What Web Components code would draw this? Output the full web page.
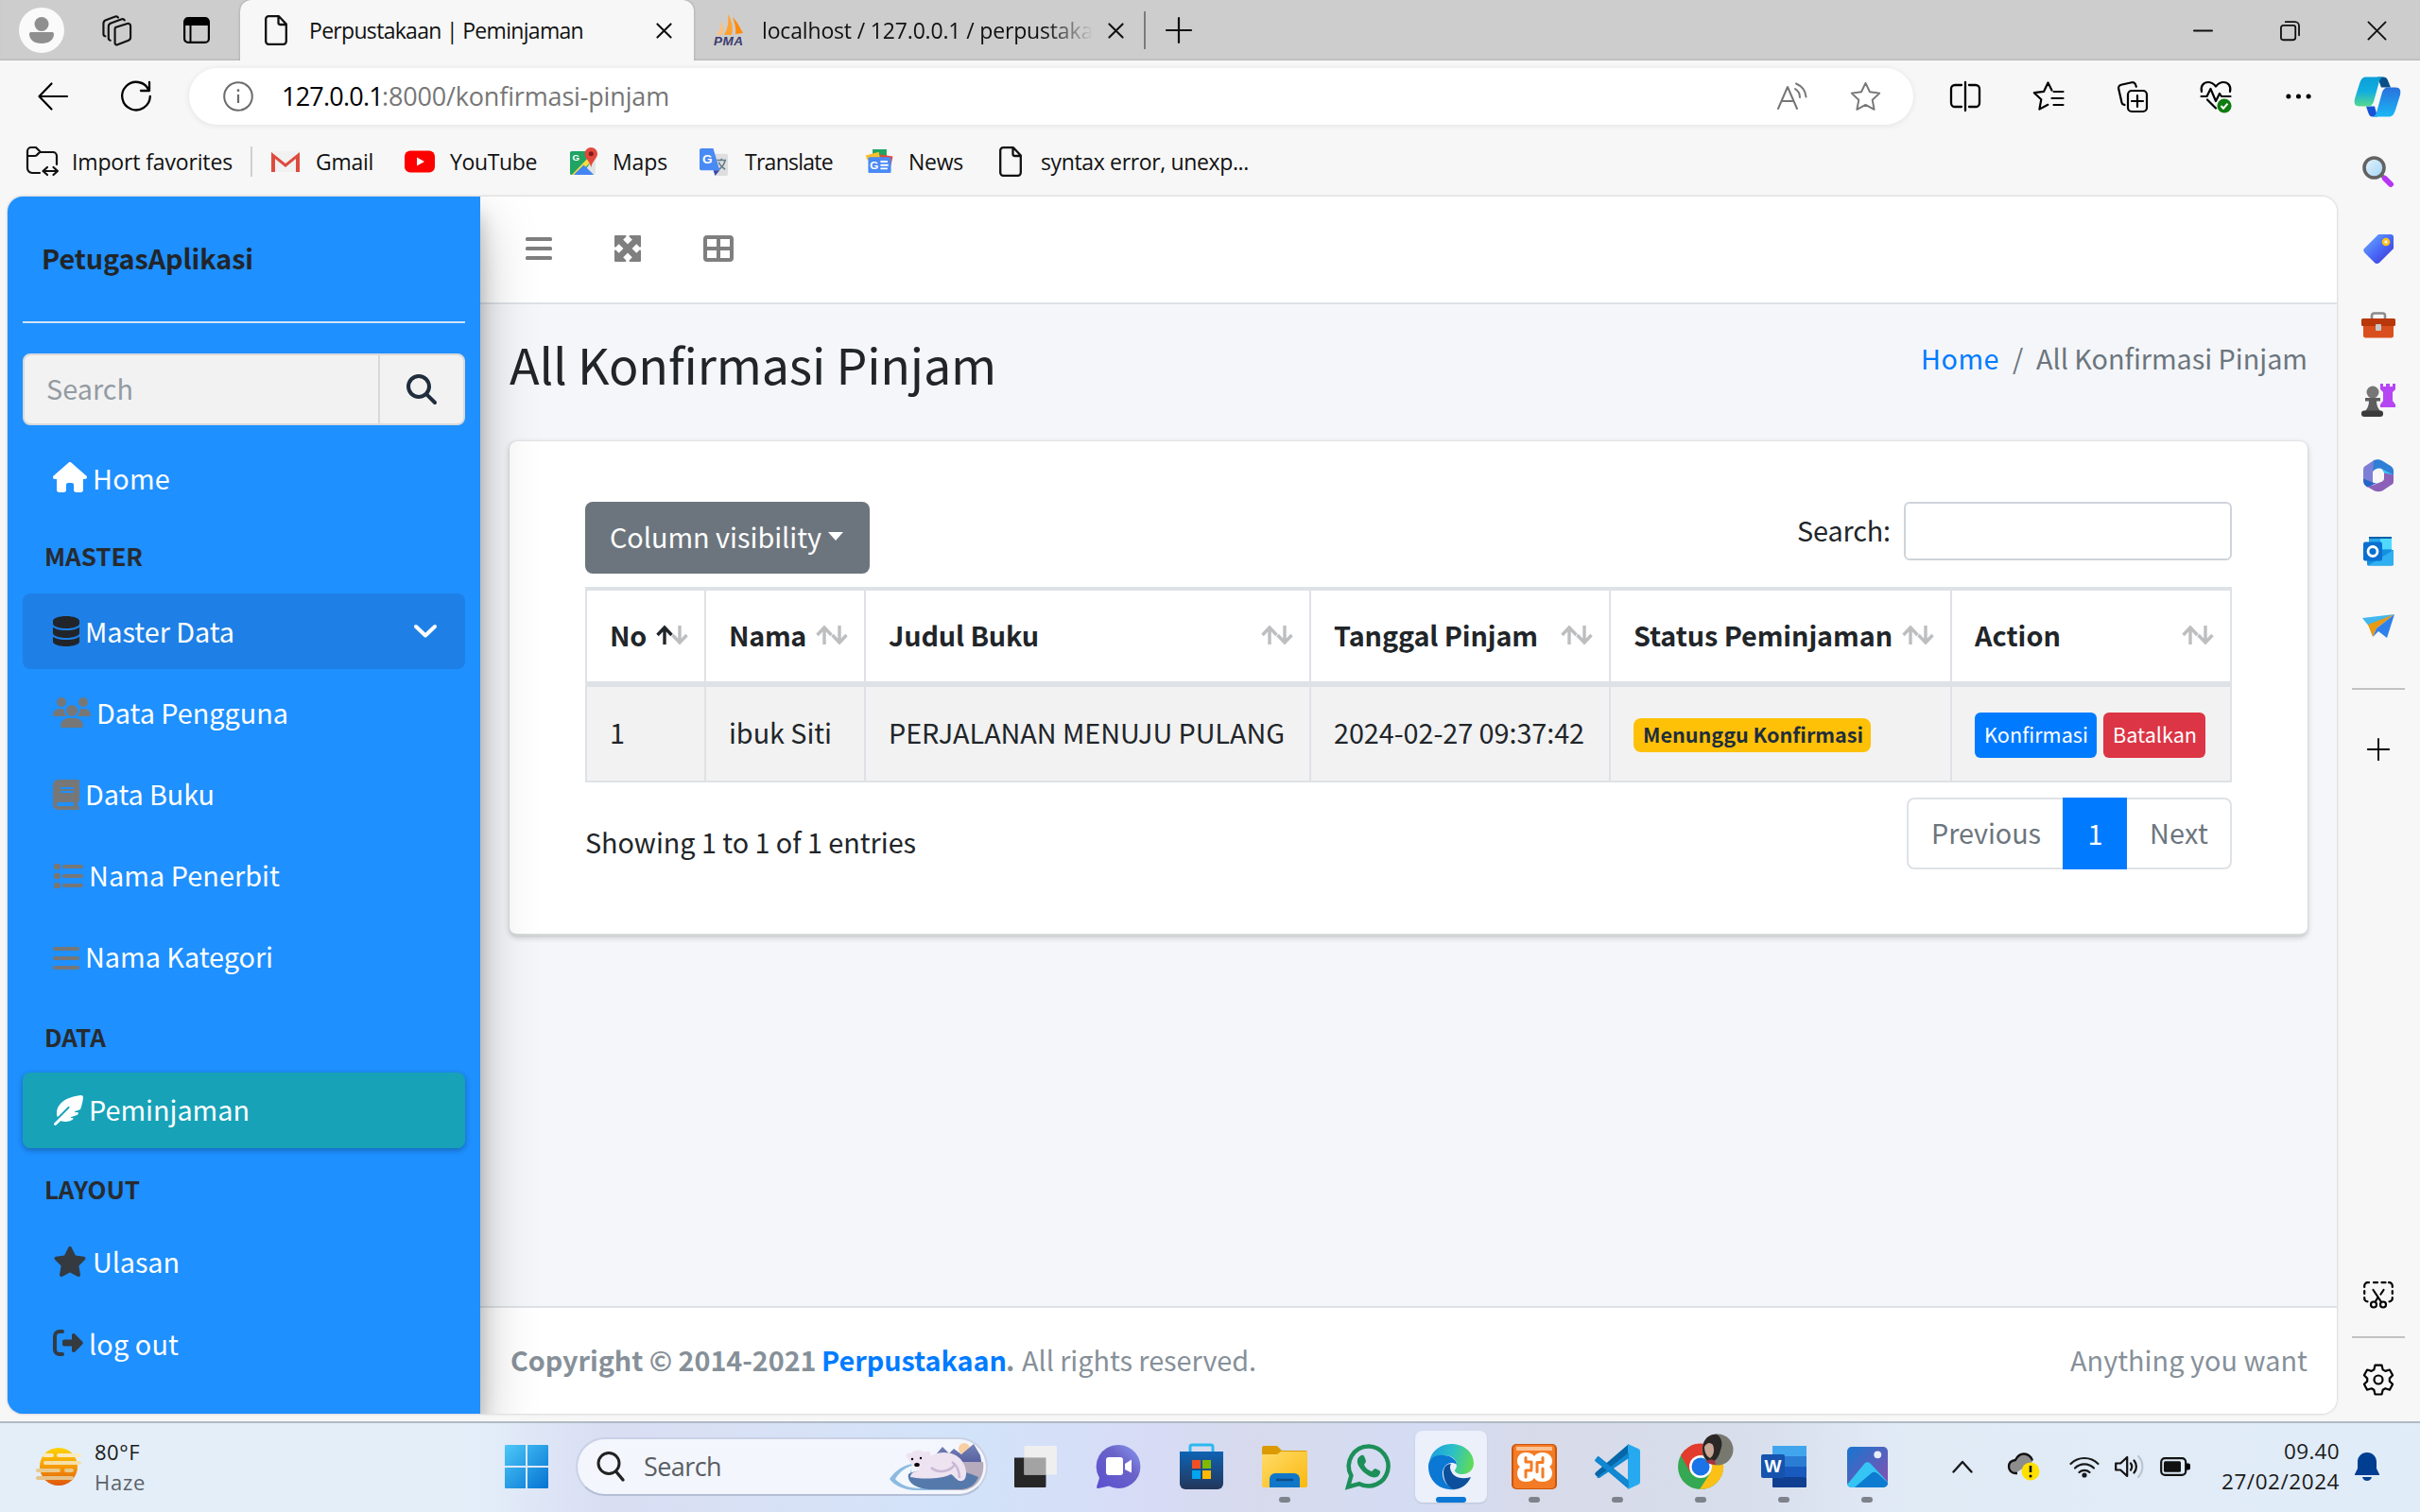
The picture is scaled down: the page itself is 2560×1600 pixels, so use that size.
<!DOCTYPE html>
<html lang="id">
<head>
<meta charset="utf-8">
<title>Perpustakaan | Peminjaman</title>
<style>
html,body{margin:0;padding:0;width:2560px;height:1600px;overflow:hidden;background:#f7f7f7}
</style>
</head>
<body>
<desktop-screen></desktop-screen>
<script>
const SOURCE = '"Noto Sans CJK SC","Noto Sans",sans-serif';
const SEGOE = '"Open Sans","Noto Sans",sans-serif';

const fa = (w, d) => [`0 0 ${w} 512`, `<path fill="currentColor" d="${d}"/>`];
const line = (vb, d, sw = 2.2, extra = '') => [vb, `<g fill="none" stroke="currentColor" stroke-width="${sw}" stroke-linecap="round" stroke-linejoin="round"><path d="${d}"/>${extra}</g>`];

const ICONS = {
  profile: ['0 0 48 48', '<circle cx="24" cy="24" r="24" fill="#fafafa"/><circle cx="24" cy="17.500" r="7.500" fill="#8f8f8f"/><path d="M12.500 26h23a1.800 1.800 0 0 1 1.500 2c0 6-5 10-13 10s-13-4-13-10a1.800 1.800 0 0 1 1.500-2z" fill="#8f8f8f"/>'],
  workspaces: line('0 0 34 34', 'M15 13.500l13-4.200a2.600 2.600 0 0 1 3.500 2.500v12.500a3.500 3.500 0 0 1-2.200 3.300l-12 4.700a2 2 0 0 1-2.800-1.900V16a3.200 3.200 0 0 1 .5-2.500zM9.500 27.500a2.500 2.500 0 0 1-2-2.500V12.500a4 4 0 0 1 2.600-3.700L22 4.500a2.500 2.500 0 0 1 3 1M4 23a2.500 2.500 0 0 1-2-2.500V9a4 4 0 0 1 2.600-3.700L15 1.600a2.500 2.500 0 0 1 3 1', 2.2),
  vtabs: ['0 0 28 28', '<rect x="1.100" y="1.100" width="25.800" height="25.800" rx="4" fill="none" stroke="#000" stroke-width="2.200"/><path d="M1 9V5a4 4 0 0 1 4-4h18a4 4 0 0 1 4 4v4z"/><path d="M7.500 8v19" stroke="#000" stroke-width="2"/>'],
  file: line('0 0 24 32', 'M4 1.200h11l7.800 8.300v18.300a3 3 0 0 1-3 3H4.200a3 3 0 0 1-3-3V4.200a3 3 0 0 1 3-3zM14.500 1.500v6.500a2 2 0 0 0 2 2h6', 2.3),
  close: line('0 0 18 18', 'M1.500 1.500l15 15M16.500 1.500l-15 15', 2.2),
  plus: line('0 0 28 28', 'M14 1v26M1 14h26', 2.2),
  min: line('0 0 22 22', 'M1 11h20', 2),
  restore: line('0 0 22 22', 'M3.500 5.200h11a2.500 2.500 0 0 1 2.500 2.500v11a2.500 2.500 0 0 1-2.500 2.500h-11A2.500 2.500 0 0 1 1 18.700v-11a2.500 2.500 0 0 1 2.500-2.500zM6 1.200h10.500a4.500 4.500 0 0 1 4.500 4.500V16', 1.9),
  winclose: line('0 0 22 22', 'M1.500 1.500l19 19M20.500 1.500l-19 19', 2),
  pma: ['0 0 32 34', '<path d="M15 0c1 8 0 15-4 22h8C21 14 19 6 15 0z" fill="#ffa233"/><path d="M20 3c5 5 7 10 11 17l-8 1c1-6-1-12-3-18z" fill="#ff8a0a"/><path d="M7 7c1 6 0 10-4 15h6c2-5 1-10-2-15z" fill="#ffc07a"/><text x="0" y="32.500" font-family="Liberation Sans" font-weight="700" font-style="italic" font-size="13.500" textLength="31" fill="#3c3c6e">PMA</text>'],
  back: line('0 0 32 30', 'M31 15H2M14.500 1.500L1.500 15l13 13.500', 2.2),
  reload: line('0 0 32 32', 'M29.500 9.500A14.800 14.800 0 1 0 30.800 16M30 1v9h-9', 2.3),
  info: ['0 0 32 32', '<circle cx="16" cy="16" r="14.800" fill="none" stroke="#6b6b6b" stroke-width="2"/><path d="M16 14v9" stroke="#6b6b6b" stroke-width="2.200"/><circle cx="16" cy="9.700" r="1.400" fill="#6b6b6b"/>'],
  read: ['0 0 32 30', '<g fill="none" stroke="#767676" stroke-width="2" stroke-linecap="round" stroke-linejoin="round"><path d="M1 28L11 5l10 23M4.500 20h13M19 7c3 2 5 5 5 9M20 1.500c6 2.500 10 7.500 10.500 14"/></g>'],
  star: ['0 0 34 32', '<path d="M17 1.500l4.600 9.600 10.600 1.400-7.800 7.300 2 10.500L17 25.200l-9.400 5.100 2-10.500-7.800-7.300 10.600-1.400z" fill="none" stroke="#767676" stroke-width="2" stroke-linejoin="round"/>'],
  split: line('0 0 32 32', 'M16 1v30M12 4H5a4 4 0 0 0-4 4v15a4 4 0 0 0 4 4h7M20 4h7a4 4 0 0 1 4 4v15a4 4 0 0 1-4 4h-7', 2.3),
  favs: line('0 0 34 32', 'M20.500 9.500L16.500 1.500l-4.400 9.300-10.300 1.400 7.500 7-1.900 10.400 9-4.800M22.500 11h10M20.500 18h12M22.500 25h10', 2.2),
  collect: line('0 0 32 33', 'M15 10h12a4 4 0 0 1 4 4v14a4 4 0 0 1-4 4H15a4 4 0 0 1-4-4V14a4 4 0 0 1 4-4zM21 15v12M15 21h12M7.500 25l-1-.4a3 3 0 0 1-2-2.200L1.200 8a3.500 3.500 0 0 1 2.600-4.200L15 1.200a3.500 3.500 0 0 1 4.200 2.600l.6 2', 2.2),
  heart: ['0 0 34 34', '<g fill="none" stroke="#000" stroke-width="2.200" stroke-linecap="round" stroke-linejoin="round"><path d="M2 12C.5 6 4 2 9 2c4 0 6 2 8 4.500C19 4 21 2 25 2c5 0 8.500 4 7 10M1.500 17h6l4-8 5.500 13 4-8 2 3h9.500M8 20.500l9 9"/></g><circle cx="26" cy="27" r="7.600" fill="#107c10"/><path d="M22.500 27l2.500 2.700 4.500-5" fill="none" stroke="#fff" stroke-width="2"/>'],
  dots: ['0 0 28 8', '<circle cx="3" cy="4" r="2.600"/><circle cx="14" cy="4" r="2.600"/><circle cx="25" cy="4" r="2.600"/>'],
  copilot: ['0 0 48 42', '<defs><linearGradient id="a" x1="0" y1="0" x2="0" y2="1"><stop offset="0" stop-color="#0a9fd8"/><stop offset=".5" stop-color="#12aee0"/><stop offset="1" stop-color="#55d98c"/></linearGradient><linearGradient id="b" x1="0" y1="0" x2="0" y2="1"><stop offset="0" stop-color="#2a70dc"/><stop offset="1" stop-color="#19b8f5"/></linearGradient></defs><path d="M24 0h6c4 0 5 3 6 6l2 5H28z" fill="#0a4f86"/><path d="M12 31h9l3 11h-5c-3 0-4-2-5-5z" fill="#1552d6"/><path d="M12 0h19c-4 0-5 4-6 8l-5 18c-1 3-3 5-6 5H5c-5 0-6-3-5-8L5 7c2-5 3-7 7-7z" fill="url(#a)"/><path d="M36 42H18c4 0 5-4 6-8l5-18c1-3 3-5 6-5h8c5 0 6 3 5 8l-5 16c-2 5-3 7-7 7z" fill="url(#b)"/>'],
  folderimp: line('0 0 34 32', 'M14 28H6a5 5 0 0 1-5-5V5a4 4 0 0 1 4-4h5l5 5h13a4 4 0 0 1 4 4v9M1 10h8c3 0 3-4 6-4M18 26h15M22 22l-4.500 4 4.500 4M28.500 22l4.500 4-4.500 4', 2.2),
  gmail: ['0 0 32 24', '<path d="M1 1h30v22H1z" fill="#f1f1f1"/><path d="M1 2l15 12L31 2v21h-4V9L16 18 5 9v14H1z" fill="#dd4b3e"/>'],
  yt: ['0 0 32 24', '<rect y=".5" width="32" height="23" rx="6" fill="#f00"/><path d="M13 7.500v9l8-4.500z" fill="#fff"/>'],
  maps: ['0 0 32 32', '<rect x="1" y="4" width="27" height="26" rx="2" fill="#1fa463"/><path d="M28 10v20H14z" fill="#e3e3e3"/><path d="M3 30L25 7l4 4L9 30z" fill="#fddc3f"/><path d="M5 30l11-11 11 11z" fill="#4285f4"/><path d="M24 0a7 7 0 0 1 7 7c0 5-6 8-7 15-1-7-7-10-7-15a7 7 0 0 1 7-7z" fill="#e2483d"/><circle cx="24" cy="7" r="2.600" fill="#7c1d18"/><text x="3.500" y="14" font-family="Liberation Sans" font-weight="700" font-size="10" fill="#fff">G</text>'],
  translate: ['0 0 32 32', '<path d="M12 7h17a2 2 0 0 1 2 2v20a2 2 0 0 1-2 2H18z" fill="#dedede"/><path d="M19 14h10M24 12v2M28 14c-1 5-4 8-7 10M21 16c1 3 4 6 7 8" stroke="#607d8b" stroke-width="1.600" fill="none"/><path d="M2 1h13l7 24H2a2 2 0 0 1-2-2V3a2 2 0 0 1 2-2z" fill="#4a8af4"/><path d="M15 25h7l-5 6z" fill="#3949ab"/><text x="3" y="18" font-family="Liberation Sans" font-weight="700" font-size="14" fill="#fff">G</text>'],
  news: ['0 0 32 28', '<path d="M8 0h16v10H8z" fill="#1fa463"/><path d="M0 7l15-4 2 9H2z" fill="#fbc02d"/><path d="M17 6l14 2-2 10H17z" fill="#ea4335"/><rect x="3" y="9" width="26" height="18" rx="1.500" fill="#4a8af4"/><text x="5" y="22.500" font-family="Liberation Sans" font-weight="700" font-size="12.500" fill="#fff">G</text><path d="M17 14h8M17 18h9M17 22h8" stroke="#fff" stroke-width="2"/>'],
  mag3d: ['0 0 34 34', '<defs><linearGradient id="a" x1="0" y1="0" x2="1" y2="1"><stop offset="0" stop-color="#e8f5fd"/><stop offset="1" stop-color="#9fd3f7"/></linearGradient></defs><path d="M20 20l5 5" stroke="#777" stroke-width="4"/><path d="M24 24l6 6" stroke="#b635f5" stroke-width="6" stroke-linecap="round"/><circle cx="12.500" cy="12.500" r="10.500" fill="url(#a)" stroke="#636363" stroke-width="3.600"/>'],
  tag: ['0 0 32 32', '<defs><linearGradient id="a" x1="0" y1="0" x2="1" y2="1"><stop offset="0" stop-color="#6fb1ff"/><stop offset=".5" stop-color="#4a6cf7"/><stop offset="1" stop-color="#3b2fd0"/></linearGradient></defs><path d="M16 1h13a3 3 0 0 1 3 3v12L17 31c-2 1.500-4 1-5 0L1 20c-1-1.500-1-3 0-4z" fill="url(#a)"/><circle cx="24" cy="9" r="3" fill="#eef" stroke="#ffc20e" stroke-width="2.600"/>'],
  toolbox: ['0 0 36 28', '<path d="M11 8V4a2.500 2.500 0 0 1 2.500-2.500h9A2.500 2.500 0 0 1 25 4v4" fill="none" stroke="#8a8a8a" stroke-width="2.600"/><path d="M2 12h32v13a2.500 2.500 0 0 1-2.500 2.500h-27A2.500 2.500 0 0 1 2 25z" fill="#d9501e"/><rect y="7" width="36" height="8" rx="1.500" fill="#b9380b"/><rect x="15" y="13" width="6" height="7" rx="1" fill="#c4c9cc"/>'],
  chess: ['0 0 36 36', '<path d="M20 1h3v3h3V1h4v3h3V1h3v6l-3 3v9l3 4v3H20v-3l3-4v-9l-3-3z" fill="#b646f3"/><circle cx="12" cy="10" r="6.500" fill="#767676"/><path d="M4 16h16v3.500H16c0 5 2 8 4 10.500H4c2-2.500 4-5.500 4-10.500H4z" fill="#5d5d5d"/><rect y="29.500" width="23" height="6.500" rx="3" fill="#3b3b3b"/>'],
  m365: ['0 0 32 34', '<path d="M12 0v10c-1 1-2 2-2 4v11c0 3-2 5-5 4l-3-2c-1-1-2-2-2-4V11c0-3 1-4 3-5z" fill="#7d7fd6"/><path d="M0 20l10 4c2 1 4 1 6 0L4 29l-2-2c-1-1-2-4-2-7z" fill="#2566c8"/><path d="M11 1c4-2 6-1 9 0l8 5c3 2 4 3 4 6v9L20 10c-3-2-6-1-10 2z" fill="#2f7fd6"/><path d="M20 10l12 6v5L22 14z" fill="#38c6f5"/><path d="M32 16v7c0 2-1 3-3 4l-9 6c-3 1-5 1-8 0l-7-4 15-6c2-1 2-3 2-5v-4z" fill="#8c5fb8"/><path d="M16 11l6 4v5l-6 4-6-4v-5z" fill="#f7f7f7"/>'],
  outlook: ['0 0 32 32', '<rect x="6" y="1" width="24" height="20" fill="#28a8ea"/><path d="M18 1h12v13H18z" fill="#50d9ff"/><path d="M6 1h24v2H6z" fill="#0a5fa8"/><path d="M4 15h28v15a1.500 1.500 0 0 1-1.500 1.500h-25A1.500 1.500 0 0 1 4 30z" fill="#1490df"/><path d="M32 15L5 31.500h25c1 0 2-1 2-2z" fill="#2fb0f0"/><rect y="6.500" width="20" height="20" rx="2" fill="#0a6fd0"/><circle cx="10" cy="16.500" r="5" fill="none" stroke="#fff" stroke-width="2.800"/>'],
  plane: ['0 0 34 26', '<path d="M0 4L34 0 8 14z" fill="#41b7ee"/><path d="M34 0L6 11l5 13 4-9z" fill="#e99a13"/><path d="M34 0L15 15l-4 9 6-6 9 7z" fill="#2f80ea"/>'],
  snip: ['0 0 32 28', '<g fill="none" stroke="#000" stroke-width="2.200" stroke-linecap="round"><path d="M1.200 6V4.500A3.300 3.300 0 0 1 4.500 1.200H6M11 1.200h4M19.500 1.200h4M27 1.200h.5a3.300 3.300 0 0 1 3.300 3.300V6M30.800 10v3M1.200 10v3M1.200 17v1a3.300 3.300 0 0 0 3.300 3.300M30.800 17v1a3.300 3.300 0 0 1-3.300 3.300M10.500 9l8 12M21.500 9l-3 4.500M15.500 17l-2.500 4"/><circle cx="11" cy="24.500" r="3"/><circle cx="21" cy="24.500" r="3"/></g>'],
  gear: line('0 0 32 34', 'M12.500 1.600h7l1.200 4.800 2.600 1.500 4.600-1.400 3.200 5.800-3.300 3.300v3l3.300 3.200-3.200 5.900-4.600-1.400-2.600 1.500-1.200 4.700h-7l-1.200-4.700-2.600-1.500-4.600 1.400-3.200-5.900 3.300-3.200v-3L.9 12.300l3.200-5.800 4.600 1.400 2.600-1.500z', 2.2, '<circle cx="16" cy="17" r="4.500"/>'),
  search: fa(512, 'M416 208c0 45.900-14.900 88.300-40 122.700L502.600 457.400c12.500 12.500 12.500 32.800 0 45.300s-32.800 12.500-45.300 0L330.700 376c-34.400 25.200-76.800 40-122.700 40C93.100 416 0 322.900 0 208S93.100 0 208 0S416 93.100 416 208zM208 352a144 144 0 1 0 0-288 144 144 0 1 0 0 288z'),
  house: fa(576, 'M575.8 255.500c0 18-15 32.100-32 32.100h-32l.7 160.200c0 2.700-.2 5.400-.5 8.100V472c0 22.100-17.900 40-40 40H456c-1.100 0-2.200 0-3.300-.1c-1.400 .1-2.800 .1-4.200 .1H416 392c-22.100 0-40-17.900-40-40V448 384c0-17.700-14.300-32-32-32H256c-17.700 0-32 14.300-32 32v64 24c0 22.100-17.900 40-40 40H160 128.100c-1.500 0-3-.1-4.500-.2c-1.200 .1-2.400 .2-3.600 .2H104c-22.100 0-40-17.900-40-40V360c0-.9 0-1.900 .1-2.800V287.600H32c-18 0-32-14-32-32.100c0-9 3-17 10-24L266.400 8c7-7 15-8 22-8s15 2 21 7L564.800 231.500c8 7 12 15 11 24z'),
  database: fa(448, 'M448 80v48c0 44.200-100.300 80-224 80S0 172.200 0 128V80C0 35.800 100.300 0 224 0S448 35.800 448 80zM393.200 214.700c20.800-7.400 39.900-16.900 54.800-28.600V288c0 44.200-100.300 80-224 80S0 332.200 0 288V186.100c14.900 11.800 34 21.200 54.800 28.600C99.700 230.700 159.500 240 224 240s124.300-9.300 169.200-25.300zM0 346.100c14.900 11.800 34 21.200 54.800 28.600C99.700 390.700 159.500 400 224 400s124.300-9.300 169.200-25.300c20.800-7.400 39.900-16.900 54.800-28.600V432c0 44.200-100.300 80-224 80S0 476.200 0 432V346.100z'),
  users: fa(640, 'M144 0a80 80 0 1 1 0 160A80 80 0 1 1 144 0zM512 0a80 80 0 1 1 0 160A80 80 0 1 1 512 0zM0 298.700C0 239.800 47.800 192 106.700 192h42.700c15.900 0 31 3.500 44.600 9.700c-1.300 7.200-1.900 14.700-1.900 22.300c0 38.200 16.800 72.500 43.300 96c-.2 0-.4 0-.7 0H21.300C9.600 320 0 310.400 0 298.700zM405.300 320c-.2 0-.4 0-.7 0c26.600-23.500 43.300-57.800 43.300-96c0-7.600-.7-15-1.900-22.300c13.600-6.300 28.700-9.700 44.600-9.700h42.700C592.200 192 640 239.800 640 298.700c0 11.800-9.600 21.300-21.300 21.300H405.300zM224 224a96 96 0 1 1 192 0 96 96 0 1 1 -192 0zM128 485.300C128 411.700 187.700 352 261.300 352H378.700C452.300 352 512 411.700 512 485.300c0 14.700-11.900 26.700-26.700 26.700H154.700c-14.700 0-26.700-11.900-26.700-26.700z'),
  book: fa(448, 'M96 0C43 0 0 43 0 96V416c0 53 43 96 96 96H384h32c17.700 0 32-14.300 32-32s-14.300-32-32-32V384c17.700 0 32-14.300 32-32V32c0-17.700-14.300-32-32-32H384 96zm0 384H352v64H96c-17.700 0-32-14.300-32-32s14.300-32 32-32zm32-240c0-8.800 7.200-16 16-16H336c8.800 0 16 7.200 16 16s-7.200 16-16 16H144c-8.800 0-16-7.200-16-16zm16 48H336c8.800 0 16 7.200 16 16s-7.200 16-16 16H144c-8.800 0-16-7.200-16-16s7.200-16 16-16z'),
  list: ['0 0 32 32', '<g fill="currentColor"><rect x="1" y="3" width="7" height="6" rx="1.500"/><rect x="1" y="13" width="7" height="6" rx="1.500"/><rect x="1" y="23" width="7" height="6" rx="1.500"/><rect x="10" y="4" width="22" height="4" rx="2"/><rect x="10" y="14" width="22" height="4" rx="2"/><rect x="10" y="24" width="22" height="4" rx="2"/></g>'],
  bars: ['0 0 28 32', '<g fill="currentColor"><rect y="4" width="28" height="4" rx="2"/><rect y="14" width="28" height="4" rx="2"/><rect y="24" width="28" height="4" rx="2"/></g>'],
  feather: fa(512, 'M278.500 215.600L23 471c-9.400 9.400-9.400 24.600 0 33.900s24.600 9.400 33.900 0l74.800-74.800c7.400 4.600 15.300 8.200 23.800 10.500C200.300 452.800 270 454.500 338 409.400c12.200-8.100 5.800-25.400-8.800-25.400l-16.100 0c-5.100 0-9.200-4.100-9.200-9.200c0-4.100 2.700-7.600 6.500-8.800l97.700-29.300c3.400-1 6.400-3.100 8.400-6.100c4.400-6.400 8.600-12.900 12.600-19.600c6.200-10.300-1.500-23-13.500-23l-38.600 0c-5.100 0-9.200-4.100-9.200-9.200c0-4.100 2.700-7.600 6.500-8.800l80.900-24.300c4.600-1.400 8.400-4.800 10.200-9.300C494.500 163 507.800 86.100 511.900 36.800c.8-9.900-3-19.600-10-26.600s-16.700-10.800-26.600-10C391.500 7 228.500 40.500 137.400 131.600C57.300 211.700 56.700 302.300 71.300 356.400c2.100 7.900 12 9.600 17.800 3.800L253.600 195.800c6.200-6.200 16.400-6.200 22.600 0c5.400 5.400 6.100 13.600 2.200 19.800z'),
  fastar: fa(576, 'M316.900 18C311.600 7 300.400 0 288.100 0s-23.400 7-28.800 18L195 150.300 51.400 171.500c-12 1.800-22 10.200-25.700 21.700s-.7 24.200 7.900 32.700L137.800 329 113.200 474.700c-2 12 3 24.200 12.900 31.300s23 8 33.800 2.300l128.300-68.500 128.300 68.500c10.800 5.700 23.900 4.900 33.800-2.300s14.900-19.300 12.900-31.300L438.500 329 542.700 225.900c8.600-8.500 11.700-21.200 7.900-32.700s-13.700-19.900-25.700-21.700L381.200 150.300 316.900 18z'),
  logout: ['0 0 32 28', '<path d="M10 2H7a5 5 0 0 0-5 5v14a5 5 0 0 0 5 5h3" fill="none" stroke="currentColor" stroke-width="4" stroke-linecap="round"/><path d="M12 10.500h8V6c0-1.800 2-2.500 3.300-1.300l8 8a2 2 0 0 1 0 2.700l-8 8C22 24.600 20 24 20 22v-4.500h-8a2 2 0 0 1-2-2v-3a2 2 0 0 1 2-2z" fill="currentColor"/>'],
  chev: line('0 0 24 16', 'M2 3l10 9.500L22 3', 4),
  menu: ['0 0 28 28', '<g fill="currentColor"><rect y="2" width="28" height="4" rx="1.500"/><rect y="12" width="28" height="4" rx="1.500"/><rect y="22" width="28" height="4" rx="1.500"/></g>'],
  expand: ['0 0 28 28', '<path d="M5 5l18 18M23 5L5 23" stroke="currentColor" stroke-width="6.500"/><path d="M0 1a1 1 0 0 1 1-1h10.500c1 0 1.300 1 .6 1.700L1.700 12.200C1 13 0 12.500 0 11.500zM28 1a1 1 0 0 0-1-1h-10.500c-1 0-1.300 1-.6 1.700l10.400 10.500c.7.800 1.700.300 1.700-.700zM0 27a1 1 0 0 0 1 1h10.500c1 0 1.300-1 .6-1.700L1.700 15.800C1 15 0 15.500 0 16.500zM28 27a1 1 0 0 1-1 1h-10.500c-1 0-1.300-1-.6-1.700l10.400-10.500c.7-.8 1.700-.3 1.700.7z" fill="currentColor"/>'],
  table: ['0 0 32 28', '<path fill="currentColor" fill-rule="evenodd" d="M4 0h24a4 4 0 0 1 4 4v20a4 4 0 0 1-4 4H4a4 4 0 0 1-4-4V4a4 4 0 0 1 4-4zm0 4v8h10V4zm14 0v8h10V4zM4 16v8h10v-8zm14 0v8h10v-8z"/>'],
  caret: ['0 0 16 9', '<path d="M0 0h16L8 9z" fill="#fff"/>'],
  sort: ['0 0 34 20', '<g fill="none" stroke-width="3.400"><path stroke="#bdbec0" d="M25 0v17M17.500 10l7.500 8 7.500-8"/><path stroke="var(--up,#bdbec0)" d="M9 20V2M1.500 10L9 2l7.500 8"/></g>'],
  haze: ['0 0 48 40', '<defs><linearGradient id="a" x1="0" y1="0" x2="0" y2="1"><stop offset="0" stop-color="#fdd400"/><stop offset=".5" stop-color="#f59b08"/><stop offset="1" stop-color="#e0560b"/></linearGradient></defs><circle cx="24" cy="20" r="20" fill="url(#a)"/><g stroke-width="4" stroke-linecap="round"><path d="M24 8h22M9 8h8" stroke="#fbeac0"/><path d="M10 16h36" stroke="#f7dfa8"/><path d="M2 24h22M32 24h6" stroke="#e9c98c"/><path d="M2 32h36" stroke="#e5c28a"/></g>'],
  win: ['0 0 46 46', '<defs><linearGradient id="a" x1="0" y1="0" x2="1" y2="1" ><stop offset="0" stop-color="#4cc8f8"/><stop offset="1" stop-color="#0573d2"/></linearGradient></defs><path fill="url(#a)" d="M1 0h21v22H0V1a1 1 0 0 1 1-1zM24 0h21a1 1 0 0 1 1 1v21H24zM0 24h22v22H1a1 1 0 0 1-1-1zM24 24h22v21a1 1 0 0 1-1 1H24z"/>'],
  tsearch: ['0 0 30 32', '<circle cx="13" cy="12.500" r="11" fill="none" stroke="#222" stroke-width="3"/><path d="M20.500 21l7.500 9" stroke="#222" stroke-width="3.400" stroke-linecap="round"/>'],
  bear: ['0 0 100 50', '<defs><linearGradient id="a" x1="0" y1="0" x2="0" y2="1"><stop offset="0" stop-color="#7683b8"/><stop offset="1" stop-color="#434b8f"/></linearGradient></defs><circle cx="79" cy="6" r="6" fill="#f8cfa0"/><path d="M44 18l12-14 7 7 5-5 8 6 13-11 7 12 2 12v8H50z" fill="url(#a)"/><path d="M68 20h31c2 14-6 29-22 30H40z" fill="#b5abbc"/><path d="M24 22C12 24 4 32 0 38c5 7 14 11 26 12h46C40 50 18 42 24 22z" fill="#8dbbe0"/><path d="M6 38c5-8 11-12 18-14-4 10-2 19 10 24-14 0-23-4-28-10z" fill="#f2f8fd"/><path d="M20 33c8-6 50-8 74 3-3 8-9 12-18 13H42C28 48 18 42 20 33z" fill="#5679ab"/><path d="M22 35c2-5 7-5 11-7-6-2-12-6-13-11-4-3-2-8 3-6 3-4 10-5 14-1 4-3 8 0 6 4 12-7 30-5 36 9 3 7 3 15-2 17-6 1-7-4-12-7-10 5-24 5-37 4-4-1-6 0-6-2z" fill="#ede3f1"/><path d="M44 26c8 7 20 4 25-3M66 20c6 4 8 10 8 17" fill="none" stroke="#c9b8d6" stroke-width="2.500"/><circle cx="24" cy="17" r="1.200"/><circle cx="33" cy="16" r="1.200"/><ellipse cx="29" cy="23" rx="2.800" ry="2"/>'],
  taskview: ['0 0 48 46', '<path d="M1 13h35v32a1 1 0 0 1-1 1H2a1 1 0 0 1-1-1z" fill="#272727"/><path d="M13 0h34a1 1 0 0 1 1 1v31H12V1z" fill="#efefef"/><path d="M12 13h24v19H12z" fill="#a3a3a3"/>'],
  chat: ['0 0 46 46', '<defs><linearGradient id="a" x1="0" y1="1" x2="1" y2="0"><stop offset="0" stop-color="#5a4fd0"/><stop offset=".6" stop-color="#6a63c8"/><stop offset="1" stop-color="#8b9bf2"/></linearGradient></defs><path d="M23 0a23 23 0 1 1-10 43.500L2 46c-1.500.3-2.300-1-1.700-2.300L3 35A23 23 0 0 1 23 0z" fill="url(#a)"/><rect x="10" y="13" width="18" height="19" rx="3" fill="#fff"/><path d="M30 20l7-4.500v14L30 26z" fill="#fff"/>'],
  store: ['0 0 46 48', '<defs><linearGradient id="a" x1="0" y1="0" x2="0" y2="1"><stop offset="0" stop-color="#0e63b4"/><stop offset="1" stop-color="#24365a"/></linearGradient></defs><path d="M11 10V3a2 2 0 0 1 2-2h20a2 2 0 0 1 2 2v7" fill="none" stroke="#2cb8f0" stroke-width="3"/><path d="M0 8h46v34a6 6 0 0 1-6 6H6a6 6 0 0 1-6-6z" fill="url(#a)"/><path d="M13 17h9v9h-9z" fill="#f25022"/><path d="M24 17h9v9h-9z" fill="#7fba00"/><path d="M13 28h9v9h-9z" fill="#00a4ef"/><path d="M24 28h9v9h-9z" fill="#ffb900"/>'],
  explorer: ['0 0 48 44', '<path d="M0 2a2 2 0 0 1 2-2h14l5 5h25a2 2 0 0 1 2 2v8H0z" fill="#dc9a05"/><defs><linearGradient id="a" x1="0" y1="0" x2="1" y2="1"><stop offset="0" stop-color="#ffdc6b"/><stop offset="1" stop-color="#fbb80e"/></linearGradient></defs><path d="M0 9h16l4-3h28v36a2 2 0 0 1-2 2H2a2 2 0 0 1-2-2z" fill="url(#a)"/><path d="M8 44V35a6 6 0 0 1 6-6h20a6 6 0 0 1 6 6v9z" fill="#1077c8"/><path d="M15 36h18" stroke="#0c4d8a" stroke-width="2.500"/>'],
  whatsapp: ['0 0 48 48', '<path d="M25 2.500a21 21 0 1 1-10 39.700L3 45.500l3.400-12A21 21 0 0 1 25 2.500z" fill="none" stroke="#1d8f58" stroke-width="4.500"/><path d="M17 12c2-1 3 0 4 3l1 3c0 2-2 3-2 4 2 4 5 6 8 7 1 0 2-3 4-3l4 2c2 1 1 4-1 6-4 3-9 1-14-3-5-4-9-10-8-14 0-2 2-4 4-5z" fill="#1d8f58"/>'],
  edge: ['0 0 48 48', '<defs><linearGradient id="a" x1="0" y1=".3" x2="1" y2=".5"><stop offset="0" stop-color="#1b9de0"/><stop offset=".5" stop-color="#2cc0c8"/><stop offset="1" stop-color="#5fdc56"/></linearGradient></defs><path d="M1 19C3 7 13 0 24 0c15 0 24 10 24 20 0 8-6 12-12 12-5 0-8-2-8-4 0-1 2-2 2-6 0-6-6-10-13-10C9 12 3 15 1 19z" fill="url(#a)"/><path d="M0 24c0-9 8-13 16-12 8 0 14 5 14 10-6-5-15 0-15 9 0 8 5 15 14 17C12 50 0 39 0 24z" fill="#0b78d4"/><path d="M16 30c0-6 4-9 8-9-2 3-1 8 3 12 5 4 12 4 18 2-3 7-10 13-18 13C20 46 16 38 16 30z" fill="#0c4f9c"/>'],
  xampp: ['0 0 48 48', '<rect width="48" height="48" rx="5" fill="#c9550c"/><rect x="2" y="1" width="44" height="46" rx="4" fill="#f47b25"/><path d="M5 3h38v4H5z" fill="#fcc093"/><path d="M15 9c4 0 7 1 9 4 2-3 5-4 9-4 6 0 10 4 10 9 0 3-1 5-3 6 2 2 3 4 3 7 0 5-4 9-10 9-4 0-7-1-9-4-2 3-5 4-9 4-6 0-9-4-9-9 0-3 1-5 3-7-2-1-3-3-3-6 0-5 3-9 9-9z" fill="#fff"/><path d="M15 14.500v4.500h6M21 19v7M33 14.500v5h-5M27 19.500v10M15 35v-7h6M33 35v-9" fill="none" stroke="#f47b25" stroke-width="3" stroke-linecap="round" stroke-linejoin="round"/>'],
  vscode: ['0 0 48 48', '<path d="M0 17l4-4 31 25v9L1 18z" fill="#0b7cc6"/><path d="M0 32l4 4 32-25V0L1 30z" fill="#0567a8"/><path d="M35 0l11 5a3 3 0 0 1 2 3v32a3 3 0 0 1-2 3l-11 5z" fill="#27a9f0"/><path d="M3 13l33 26v7L0 18zM2 36L36 9v6L5 36z" fill="#1088d2"/>'],
  chrome: ['0 0 60 60', '<circle cx="25" cy="35" r="24" fill="#34a853"/><path d="M4 23a24 24 0 0 1 42 0l-21 1-11 17z" fill="#e33b2e"/><path d="M46 23a24 24 0 0 1-22 36l11-17c3-5 2-12-2-18z" fill="#fbc116"/><circle cx="25" cy="35" r="12" fill="#fff"/><circle cx="25" cy="35" r="9.500" fill="#1a73e8"/><circle cx="43" cy="17" r="16.500" fill="#77796f"/><path d="M27 17C27 6 34 0 42 .7c5 3 7 9 4 17-2 8-6 11-9 14-6-2-10-8-10-15z" fill="#2b2726"/><path d="M29 14c3-5 6-5 9-2 2 6 1 11-3 14-4-2-6-7-6-12z" fill="#c9a796"/><path d="M31 30c2-3 6-3 9-1l1 4c-4 0-8-1-10-3z" fill="#a8323e"/>'],
  word: ['0 0 48 44', '<rect x="12" width="36" height="11" fill="#41a5ee"/><rect x="12" y="11" width="36" height="11" fill="#2b7cd3"/><rect x="12" y="22" width="36" height="11" fill="#185abd"/><rect x="12" y="33" width="36" height="11" rx="1" fill="#103f91"/><rect y="9" width="25" height="25" rx="2" fill="#1553ae"/><text x="3.500" y="28" font-family="Liberation Sans" font-weight="700" font-size="18" textLength="18" lengthAdjust="spacingAndGlyphs" fill="#fff">W</text>'],
  photos: ['0 0 44 44', '<defs><linearGradient id="a" x1="0" y1="0" x2="1" y2="1"><stop offset="0" stop-color="#1576d0"/><stop offset="1" stop-color="#8b4fae"/></linearGradient></defs><rect width="44" height="44" rx="5" fill="url(#a)"/><path d="M0 41l19-23c2-2 4-2 6 0l19 20v1a5 5 0 0 1-5 5H5a5 5 0 0 1-5-3z" fill="#35c5f4"/><path d="M8 44l19-16c2-1 4-1 6 1l11 10a5 5 0 0 1-5 5z" fill="#0c7bd0"/><circle cx="33" cy="8.500" r="4" fill="#e8eef8"/>'],
  tchev: line('0 0 22 14', 'M1.500 12.500L11 2l9.500 10.500', 2.4),
  cloud: ['0 0 34 30', '<path d="M8 22c-4 0-7-3-7-7s3-6 6-6c1-4 5-7 9-7 5 0 9 3 10 8" fill="#8d8d8d"/><path d="M10 22H8c-4 0-7-3-7-7s3-6.500 7-7c2-4 5-6.500 9-6.500 4 0 8 3 9 7" fill="none" stroke="#111" stroke-width="2.300"/><circle cx="24" cy="20" r="9.500" fill="#ffe000"/><path d="M24 14v7" stroke="#111" stroke-width="2.600"/><circle cx="24" cy="25" r="1.500"/>'],
  wifi: line('0 0 32 24', 'M1.500 9a20.500 20.500 0 0 1 29 0M6 13.500a14 14 0 0 1 20 0M10.500 18a8 8 0 0 1 11 0', 2.2, '<circle cx="16" cy="21" r="1.500" fill="currentColor"/>'),
  volume: ['0 0 32 26', '<g fill="none" stroke="#111" stroke-width="2.200" stroke-linejoin="round" stroke-linecap="round"><path d="M1.200 9.500h5l7-6.500v20l-7-6.500h-5zM17 9.500a6 6 0 0 1 0 7M20.500 6.500a10 10 0 0 1 0 13"/><path d="M25 2a16 16 0 0 1 0 22" stroke="#bcc6d0"/></g>'],
  battery: ['0 0 33 20', '<rect x="1.200" y="1.200" width="26" height="17.600" rx="4" fill="none" stroke="#111" stroke-width="2.200"/><rect x="4" y="4.300" width="18" height="11.500" rx="1.500" fill="#111"/><path d="M28 6.500h2a2 2 0 0 1 2 2v3a2 2 0 0 1-2 2h-2z"/>'],
  bell: ['0 0 26 30', '<path d="M13 0c6 0 10 4.500 10 10v7l3 6v1H0v-1l3-6v-7C3 4.500 7 0 13 0zM8 26h10c-1 3-3 4-5 4s-4-1-5-4z" fill="#003e92"/>']
};

class Base extends HTMLElement {
  connectedCallback() {
    if (this.shadowRoot) return;
    this.attachShadow({ mode: 'open' }).innerHTML = this.render();
  }
  a(n, d = '') { return this.getAttribute(n) ?? d; }
}

/* Inline SVG from the icon set; w and h give the box. */
class XIcon extends Base {
  render() {
    const [vb, body] = ICONS[this.a('n')];
    return `<style>:host{display:block;flex:none;width:${this.a('w')}px;height:${this.a('h')}px}svg{display:block;width:100%;height:100%;overflow:visible}</style><svg viewBox="${vb}">${body}</svg>`;
  }
}

/* One line of text whose tracking is adjusted to fill the width w. */
class FitText extends Base {
  render() {
    return `<style>:host{display:block;flex:none;width:${this.a('w')}px;white-space:pre;overflow:visible}span{display:inline-block}</style><span><slot></slot></span>`;
  }
  connectedCallback() {
    super.connectedCallback();
    const s = this.shadowRoot.querySelector('span'), n = this.textContent.length;
    const nat = s.getBoundingClientRect().width;
    if (nat) s.style.letterSpacing = ((+this.a('w') + 1 - nat) / n).toFixed(3) + 'px';
  }
}

class BrowserTabs extends Base {
  render() {
    return `<style>
      :host{display:flex;align-items:center;height:64px;background:#cdcdcd;font:23px/60px ${SEGOE};color:#111;box-shadow:inset 0 -2px 2px -1px #b4b4b4}
      .tab{position:relative;display:flex;align-items:center;width:480px;height:64px;margin-left:32px;background:#f7f7f7;border-radius:12px 12px 0 0;box-sizing:border-box;padding-left:26px;box-shadow:0 0 3px rgba(0,0,0,.25);clip-path:inset(0 -3px 0 -3px)}
      .fade{margin-left:19px;width:350px;overflow:hidden;-webkit-mask:linear-gradient(90deg,#000 300px,transparent 350px);mask:linear-gradient(90deg,#000 300px,transparent 350px)}
      i{width:2px;height:40px;background:#7b7b7b;margin-left:21px}
      .sp{flex:1}
    </style>
    <x-icon n="profile" w="48" h="48" style="margin-left:20px"></x-icon>
    <x-icon n="workspaces" w="34" h="33" style="margin-left:39px"></x-icon>
    <x-icon n="vtabs" w="28" h="28" style="margin-left:53px"></x-icon>
    <div class="tab"><x-icon n="file" w="24" h="32"></x-icon><fit-text w="289" style="margin-left:23px">Perpustakaan | Peminjaman</fit-text><x-icon n="close" w="17" h="17" style="margin-left:78px"></x-icon></div>
    <x-icon n="pma" w="32" h="34" style="margin-left:21px"></x-icon>
    <div class="fade"><fit-text w="349">localhost / 127.0.0.1 / perpustaka</fit-text></div>
    <x-icon n="close" w="17" h="17" style="margin-left:16px"></x-icon><i></i>
    <x-icon n="plus" w="28" h="28" style="margin-left:21px"></x-icon><span class="sp"></span>
    <x-icon n="min" w="21" h="21" style="margin-right:71px"></x-icon><x-icon n="restore" w="21" h="21" style="margin-right:71px"></x-icon><x-icon n="winclose" w="21" h="21" style="margin-right:35px"></x-icon>`;
  }
}

class BrowserToolbar extends Base {
  render() {
    return `<style>
      :host{display:flex;align-items:center;height:76px;font:27px/40px ${SEGOE};color:#000}
      .url{display:flex;align-items:center;width:1824px;height:60px;border-radius:30px;background:#fff;margin-left:40px;box-sizing:border-box;padding:0 34px 0 36px;box-shadow:0 1px 6px rgba(0,0,0,.09)}
      .g{color:#767676}.sp{flex:1}
      .acts{display:flex;align-items:center;gap:55px;margin-left:39px}
    </style>
    <x-icon n="back" w="32" h="30" style="margin-left:40px"></x-icon><x-icon n="reload" w="32" h="32" style="margin-left:56px"></x-icon>
    <div class="url"><x-icon n="info" w="32" h="32"></x-icon><fit-text w="106" style="margin-left:30px">127.0.0.1</fit-text><fit-text w="303" class="g">:8000/konfirmasi-pinjam</fit-text><span class="sp"></span><x-icon n="read" w="32" h="30"></x-icon><x-icon n="star" w="33" h="32" style="margin-left:45px"></x-icon></div>
    <div class="acts"><x-icon n="split" w="32" h="32"></x-icon><x-icon n="favs" w="34" h="32"></x-icon><x-icon n="collect" w="32" h="33" style="margin-left:1px"></x-icon><x-icon n="heart" w="34" h="34"></x-icon><x-icon n="dots" w="27" h="8" style="margin-left:2px"></x-icon></div>
    <x-icon n="copilot" w="48" h="43" style="margin-left:46px"></x-icon>`;
  }
}

class BookmarkItem extends Base {
  render() {
    return `<style>:host{display:flex;align-items:center;flex:none}fit-text{margin-left:${this.a('gap', 17)}px}</style><x-icon n="${this.a('icon')}" w="${this.a('iw', 32)}" h="${this.a('ih')}"></x-icon><fit-text w="${this.a('w')}">${this.a('label')}</fit-text>`;
  }
}
class BookmarkBar extends Base {
  render() {
    return `<style>:host{display:flex;align-items:center;height:68px;padding-bottom:6px;box-sizing:border-box;font:23px/40px ${SEGOE};color:#111}i{width:2px;height:32px;background:#cfcfcf;margin:0 19px 0 20px}bookmark-item{margin-right:var(--r)}</style>
    <bookmark-item icon="folderimp" iw="34" ih="32" gap="14" w="169" label="Import favorites" style="margin-left:28px"></bookmark-item><i></i>
    <bookmark-item icon="gmail" ih="24" gap="16" w="60" label="Gmail" style="--r:34px"></bookmark-item>
    <bookmark-item icon="yt" ih="24" gap="16" w="91" label="YouTube" style="--r:35px"></bookmark-item>
    <bookmark-item icon="maps" iw="31" ih="31" gap="15" w="57" label="Maps" style="--r:35px"></bookmark-item>
    <bookmark-item icon="translate" iw="31" ih="31" w="92" label="Translate" style="--r:35px"></bookmark-item>
    <bookmark-item icon="news" iw="31" ih="26" gap="15" w="57" label="News" style="--r:39px"></bookmark-item>
    <bookmark-item icon="file" iw="24" ih="32" gap="20" w="219" label="syntax error, unexp..."></bookmark-item>`;
  }
}

class NavEntry extends Base {
  render() {
    return `<style>
      :host{display:flex;align-items:center;height:80px;margin-bottom:6.400px;padding:0 30px 0 32px;border-radius:8px;line-height:78px;color:#fff;flex:none;box-sizing:border-box}
      :host([open]){background:#1e80e6}
      :host([active]){background:#17a2b8;box-shadow:0 2px 6px rgba(0,0,0,.3)}
      x-icon{color:${this.a('tint', '#fff')}} fit-text{margin:${this.a('dy', -1)}px 0 0 6px} .c{color:#fff;margin-left:auto}
    </style><x-icon n="${this.a('icon')}" w="${this.a('iw')}" h="${this.a('ih', 32)}"></x-icon><fit-text w="${this.a('w')}">${this.a('label')}</fit-text>${this.hasAttribute('open') ? '<x-icon class="c" n="chev" w="24" h="16"></x-icon>' : ''}`;
  }
}
class AppSidebar extends Base {
  render() {
    return `<style>
      :host{display:flex;flex-direction:column;width:500px;flex:none;box-sizing:border-box;padding:0 16px;background:#1e90ff;position:relative;z-index:1;font:28.800px/40px ${SOURCE};box-shadow:0 28px 56px rgba(0,0,0,.25),0 20px 20px rgba(0,0,0,.22)}
      .brand{height:134px;line-height:130px;box-sizing:border-box;border-bottom:2px solid #d2e5f8;padding-left:20px;font-weight:700;color:#212529}
      .find{display:flex;height:76px;box-sizing:border-box;margin:32px 0 15px;border:2px solid #d7d9db;border-radius:8px;background:#f2f2f2;color:#939ba2;line-height:70px}
      .find div{flex:1;padding-left:23px;border-right:2px solid #d7d9db}.find span{width:88px;display:grid;place-items:center;color:#1f2d3d}
      h6{margin:0;height:var(--h);line-height:85px;padding-left:23px;font-size:26px;color:#272b30;font-weight:700;flex:none}
      nav-entry:has(+h6){margin-bottom:0}
    </style>
    <div class="brand"><fit-text w="223">PetugasAplikasi</fit-text></div>
    <div class="find"><div><fit-text w="91">Search</fit-text></div><span><x-icon n="search" w="32" h="32"></x-icon></span></div>
    <nav-entry icon="house" iw="36" w="81" label="Home" dy="1"></nav-entry>
    <h6 style="--h:83px"><fit-text w="103">MASTER</fit-text></h6>
    <nav-entry icon="database" iw="28" w="157" label="Master Data" tint="#212529" open></nav-entry>
    <nav-entry icon="users" iw="40" w="202" label="Data Pengguna" tint="#777"></nav-entry>
    <nav-entry icon="book" iw="28" w="136" label="Data Buku" tint="#777"></nav-entry>
    <nav-entry icon="list" iw="32" w="201" label="Nama Penerbit" tint="#777" dy="-2"></nav-entry>
    <nav-entry icon="bars" iw="28" w="198" label="Nama Kategori" tint="#777" dy="-3"></nav-entry>
    <h6 style="--h:81px"><fit-text w="64">DATA</fit-text></h6>
    <nav-entry icon="feather" iw="32" w="169" label="Peminjaman" active></nav-entry>
    <h6 style="--h:80px"><fit-text w="100">LAYOUT</fit-text></h6>
    <nav-entry icon="fastar" iw="36" w="91" label="Ulasan" tint="#343a40" dy="1"></nav-entry>
    <nav-entry icon="logout" iw="32" ih="28" w="94" label="log out" tint="#343a40" dy="2"></nav-entry>`;
  }
}

class DataCard extends Base {
  render() {
    const th = (t, w, on) => `<div><fit-text w="${w}">${t}</fit-text><x-icon n="sort" w="34" h="20" ${on ? 'style="--up:#212529"' : ''}></x-icon></div>`;
    return `<style>
      :host{display:block;width:1902px;height:523px;box-sizing:border-box;padding:64px 80px 0;background:#fff;border-radius:8px;box-shadow:0 0 2px rgba(0,0,0,.125),0 2px 6px rgba(0,0,0,.2);border-bottom:2px solid #d9dadc}
      .top{display:flex;justify-content:space-between;height:90px;line-height:59px}
      .btn{display:flex;align-items:center;gap:8px;width:301px;height:76px;box-sizing:border-box;padding:0 0 2px 26px;border-radius:8px;background:#6c757d;color:#fff;line-height:72px}
      .s{display:flex;gap:15px}.in{width:347px;height:62px;box-sizing:border-box;border:2px solid #ced4da;border-radius:6px}
      .r{display:grid;grid-template-columns:126px 169px 471px 317px 361px 296px;width:1742px;box-sizing:border-box;border-left:2px solid #dee2e6}
      .r>div{display:flex;align-items:center;border-right:2px solid #dee2e6;box-sizing:border-box;padding-left:24px}
      .h{border-top:4px solid #dee2e6;border-bottom:6px solid #dee2e6;height:106px;font-weight:700;line-height:94px}
      .h fit-text{margin-top:-2px}
      .h x-icon{margin:-2px 17px 0 auto}
      .b{height:101px;background:#f2f2f2;border-bottom:2px solid #dee2e6;line-height:94px}
      .b>div>fit-text{margin-top:-4px}
      .badge,.k{font-size:21.600px;border-radius:6px;box-sizing:border-box}
      .badge{width:251px;height:36px;line-height:33px;padding-left:10px;background:#ffc107;color:#1f2d3d;font-weight:700;border-radius:8px;margin-top:3px}
      .k{height:48px;line-height:45px;color:#fff;padding-left:10px;margin-top:3px}
      .bot{display:flex;justify-content:space-between;margin-top:16px}
      .pg{display:flex;width:344px;height:76px;box-sizing:border-box;border:2px solid #dee2e6;border-radius:8px;color:#6c757d;line-height:70px}
      .pg b{font-weight:400;width:68px;height:76px;margin:-2px 24px -2px 24px;background:#007bff;color:#fff;display:flex;justify-content:center;line-height:75px}
    </style>
    <div class="top"><div class="btn"><fit-text w="223">Column visibility</fit-text><x-icon n="caret" w="16" h="9" style="margin-top:-1px"></x-icon></div>
      <div class="s"><fit-text w="98">Search:</fit-text><div class="in"></div></div></div>
    <div class="r h">${th('No', 38, 1)}${th('Nama', 81)}${th('Judul Buku', 158)}${th('Tanggal Pinjam', 215)}${th('Status Peminjaman', 273)}${th('Action', 90)}</div>
    <div class="r b"><div><fit-text w="15">1</fit-text></div><div><fit-text w="108">ibuk Siti</fit-text></div><div><fit-text w="418">PERJALANAN MENUJU PULANG</fit-text></div><div><fit-text w="264">2024-02-27 09:37:42</fit-text></div>
      <div><span class="badge"><fit-text w="232">Menunggu Konfirmasi</fit-text></span></div>
      <div><span class="k" style="width:129px;background:#007bff"><fit-text w="109">Konfirmasi</fit-text></span><span class="k" style="width:108px;background:#dc3545;margin-left:7px"><fit-text w="88">Batalkan</fit-text></span></div></div>
    <div class="bot"><fit-text w="349" style="line-height:94px">Showing 1 to 1 of 1 entries</fit-text>
      <div class="pg"><fit-text w="115" style="margin-left:24px">Previous</fit-text><b><fit-text w="15">1</fit-text></b><fit-text w="61">Next</fit-text></div></div>`;
  }
}

class AppMain extends Base {
  render() {
    return `<style>
      :host{display:flex;flex-direction:column;flex:1;background:#f4f6f9;font:28.800px/40px ${SOURCE};color:#212529}
      .nav{display:flex;align-items:center;height:114px;box-sizing:border-box;padding:0 0 2px 48px;background:#fff;border-bottom:2px solid #dee2e6;color:#7f7f7f;gap:66px}
      .head{display:flex;justify-content:space-between;height:145px;padding:0 32px 0 31px}
      h1{margin:0;font-size:52px;font-weight:400;line-height:126px}
      .crumb{display:flex;line-height:114px;color:#6c757d}
      .crumb fit-text:first-child{color:#007bff}
      data-card{margin-left:31px;flex:none}
      footer{display:flex;justify-content:space-between;margin-top:auto;height:114px;box-sizing:border-box;padding:0 32px 0 32px;background:#fff;border-top:2px solid #dee2e6;line-height:110px;color:#869099}
      footer div{display:flex}b{display:flex;font-weight:700}
    </style>
    <div class="nav"><x-icon n="menu" w="28" h="28"></x-icon><x-icon n="expand" w="28" h="28"></x-icon><x-icon n="table" w="32" h="28"></x-icon></div>
    <div class="head"><h1><fit-text w="514">All Konfirmasi Pinjam</fit-text></h1>
      <div class="crumb"><fit-text w="82">Home</fit-text><fit-text w="11" style="margin:0 14px 0 15px">/</fit-text><fit-text w="286">All Konfirmasi Pinjam</fit-text></div></div>
    <data-card></data-card>
    <footer><div><b><fit-text w="329">Copyright © 2014-2021 </fit-text><fit-text w="195" style="color:#007bff">Perpustakaan</fit-text><fit-text w="17">. </fit-text></b><fit-text w="247">All rights reserved.</fit-text></div><fit-text w="250">Anything you want</fit-text></footer>`;
  }
}

class EdgeRail extends Base {
  render() {
    const it = (n, w, h, mt) => `<x-icon n="${n}" w="${w}" h="${h}" style="margin-top:${mt}px"></x-icon>`;
    return `<style>:host{display:flex;flex-direction:column;align-items:center;width:88px;flex:none;box-sizing:border-box;padding-right:1px;margin-top:-43px}
      i{display:block;width:56px;height:2px;background:#c2c2c2;flex:none}.sp{flex:1}</style>
      ${it('mag3d', 34, 34, 0)}${it('tag', 32, 32, 48)}${it('toolbox', 36, 28, 51)}${it('chess', 36, 36, 47)}${it('m365', 32, 35, 45)}${it('outlook', 32, 32, 46)}${it('plane', 34, 26, 51)}
      <i style="margin-top:52px"></i>${it('plus', 24, 24, 51)}<span class="sp"></span>${it('snip', 32, 28, 0)}<i style="margin:30px 0 27px"></i>${it('gear', 32, 34, 0)}<span style="height:19px"></span>`;
  }
}

class TaskApp extends Base {
  render() {
    return `<style>:host{display:flex;align-items:center;justify-content:center;position:relative;width:76px;height:76px;margin:0 6px;flex:none;border-radius:8px;box-sizing:border-box}
      :host([on]){background:#ebf0fb;box-shadow:0 1px 2px #b9c2d4}
      u{position:absolute;left:50%;bottom:0;width:12px;height:6px;margin-left:-6px;border-radius:3px;background:#7e828b}
      :host([on]) u{width:32px;margin-left:-16px;background:#0a78d4}</style>
      <x-icon n="${this.a('icon')}" w="${this.a('w', 48)}" h="${this.a('h', 48)}" style="${this.a('shift')}"></x-icon>${this.hasAttribute('run') ? '<u></u>' : ''}`;
  }
}
class TaskBar extends Base {
  render() {
    return `<style>
      :host{display:flex;align-items:center;height:96px;box-sizing:border-box;border-top:2px solid #b0bac4;padding-bottom:2px;font:23px/32px ${SEGOE};color:#1a1a1a;
        background:linear-gradient(90deg,#e3eef8 0,#e4eef9 500px,#d9def3 640px,#d8e1f5 800px,#d2e3f9 1020px,#d7dcf7 1200px,#d7daec 1330px,#d4dcf4 1500px,#d7dae9 1620px,#d8deec 1850px,#e1ebf6 2020px,#e0ecf8 100%)}
      .w{margin-left:14px;width:60px;font-size:22px}.w fit-text+fit-text{color:#5c6168}
      .pill{display:flex;align-items:center;width:436px;height:62px;box-sizing:border-box;margin:0 8px 0 29px;border:2px solid #c9d1e6;border-bottom-color:#b4bfd6;border-radius:31px;background:#f3f6fd;padding:0 2px 0 20px;font-size:27px;color:#5a5d62;overflow:hidden}
      .apps{display:flex;margin-left:-2px}.tray{display:flex;align-items:center;margin-left:auto;padding-right:43px}
      .clk{width:124px;display:flex;flex-direction:column;align-items:flex-end;font-size:22.500px}
    </style>
    <x-icon n="haze" w="48" h="40" style="margin-left:38px"></x-icon><div class="w"><fit-text w="47">80°F</fit-text><fit-text w="53">Haze</fit-text></div>
    <x-icon n="win" w="46" h="46" style="margin-left:374px"></x-icon>
    <div class="pill"><x-icon n="tsearch" w="30" h="32"></x-icon><fit-text w="81" style="margin-left:20px">Search</fit-text><x-icon n="bear" w="100" h="50" style="margin-left:auto"></x-icon></div>
    <div class="apps"><task-app icon="taskview" w="48" h="44"></task-app><task-app icon="chat" w="46" h="46"></task-app><task-app icon="store" w="46"></task-app><task-app icon="explorer" h="44" run></task-app><task-app icon="whatsapp"></task-app><task-app icon="edge" on run></task-app><task-app icon="xampp" run></task-app><task-app icon="vscode" run></task-app><task-app icon="chrome" w="60" h="60" shift="margin:-10px 0 0 10px" run></task-app><task-app icon="word" h="44" run></task-app><task-app icon="photos" w="43" h="43" run></task-app></div>
    <div class="tray"><x-icon n="tchev" w="22" h="14"></x-icon><x-icon n="cloud" w="34" h="30" style="margin-left:37px"></x-icon><x-icon n="wifi" w="32" h="24" style="margin-left:31px"></x-icon><x-icon n="volume" w="32" h="26" style="margin-left:16px"></x-icon><x-icon n="battery" w="33" h="20" style="margin-left:16px"></x-icon>
      <div class="clk" style="margin-left:32px"><fit-text w="58">09.40</fit-text><fit-text w="124">27/02/2024</fit-text></div><x-icon n="bell" w="26" h="30" style="margin-left:17px"></x-icon></div>`;
  }
}

class DesktopScreen extends Base {
  render() {
    return `<style>
      :host{display:flex;flex-direction:column;width:2560px;height:1600px;background:#f7f7f7}
      .mid{display:flex;height:1296px;padding:0 0 8px 8px;box-sizing:border-box}
      .page{display:flex;width:2464px;border-radius:16px;overflow:hidden;box-shadow:0 0 3px rgba(0,0,0,.25);flex:none}
    </style>
    <browser-tabs></browser-tabs><browser-toolbar></browser-toolbar><bookmark-bar></bookmark-bar>
    <div class="mid"><div class="page"><app-sidebar></app-sidebar><app-main></app-main></div><edge-rail></edge-rail></div>
    <task-bar></task-bar>`;
  }
}

const defs = { 'desktop-screen': DesktopScreen, 'browser-tabs': BrowserTabs, 'browser-toolbar': BrowserToolbar, 'bookmark-bar': BookmarkBar, 'bookmark-item': BookmarkItem,
  'app-sidebar': AppSidebar, 'nav-entry': NavEntry, 'app-main': AppMain, 'data-card': DataCard, 'edge-rail': EdgeRail, 'task-bar': TaskBar, 'task-app': TaskApp, 'x-icon': XIcon };
for (const [name, cls] of Object.entries(defs)) customElements.define(name, cls);

/* Defined last, so that every box around a text already has its layout when the text is measured. */
customElements.define('fit-text', FitText);
</script>
</body>
</html>
